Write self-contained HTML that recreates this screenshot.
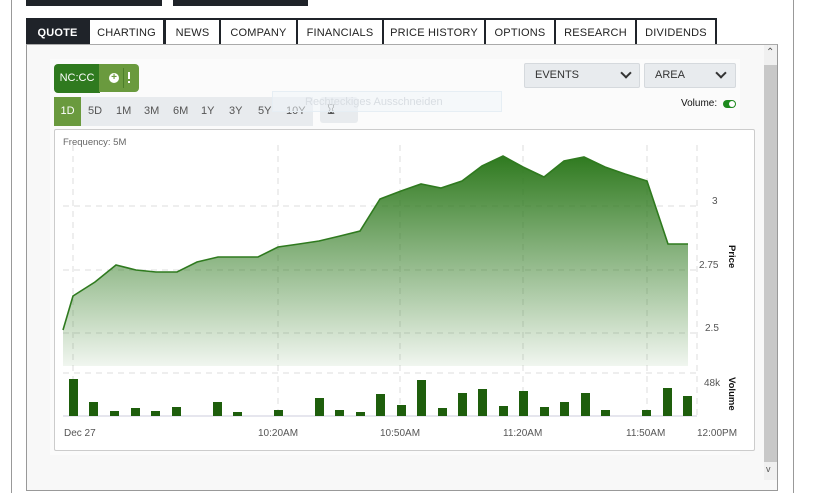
<!DOCTYPE html>
<html><head><meta charset="utf-8"><style>
*{box-sizing:border-box;margin:0;padding:0}
body{width:813px;height:493px;background:#fff;font-family:"Liberation Sans",sans-serif;position:relative;overflow:hidden}
.a{position:absolute}
.tab{position:absolute;top:18px;height:26px;border:2px solid #1f2329;border-bottom:none;font-size:11px;color:#222;text-align:center;line-height:26px;background:#fff;letter-spacing:.2px}
.rg{position:absolute;top:97px;height:29px;line-height:29px;font-size:11px;color:#555}
</style></head><body>
<div class="a" style="left:11px;top:0;width:1px;height:493px;background:#999"></div>
<div class="a" style="left:793px;top:0;width:1px;height:493px;background:#999"></div>
<div class="a" style="left:26px;top:0;width:136px;height:6px;background:#1f2329"></div>
<div class="a" style="left:173px;top:0;width:135px;height:6px;background:#1f2329"></div>

<div class="tab" style="left:26px;width:63px;background:#1f2329;color:#fff;font-weight:bold">QUOTE</div>
<div class="tab" style="left:88px;width:77px">CHARTING</div>
<div class="tab" style="left:164px;width:57px">NEWS</div>
<div class="tab" style="left:219px;width:79px">COMPANY</div>
<div class="tab" style="left:296px;width:88px">FINANCIALS</div>
<div class="tab" style="left:382px;width:104px">PRICE HISTORY</div>
<div class="tab" style="left:484px;width:72px">OPTIONS</div>
<div class="tab" style="left:554px;width:83px">RESEARCH</div>
<div class="tab" style="left:635px;width:82px">DIVIDENDS</div>

<div class="a" style="left:26px;top:44px;width:752px;height:447px;border:1px solid #999;border-top:1px solid #aaa;background:#f8f8f8"></div>
<div class="a" style="left:50px;top:59px;width:690px;height:396px;background:#fbfbfb"></div>
<div class="a" style="left:764px;top:45px;width:13px;height:435px;background:#f0f0f0"></div>
<div class="a" style="left:764px;top:65px;width:13px;height:397px;background:#c8c8c8"></div>
<div class="a" style="left:766px;top:47px;font-size:10px;color:#555">&#8963;</div>
<div class="a" style="left:766px;top:464px;font-size:9px;color:#555">v</div>

<div class="a" style="left:54px;top:64px;width:46px;height:29px;background:#2f7a1f;border-radius:4px 0 0 4px;color:#fff;font-size:11px;line-height:29px;text-align:center">NC:CC</div>
<div class="a" style="left:99px;top:64px;width:40px;height:28px;background:#6a9a3e;border-radius:0 4px 4px 0"></div>
<div class="a" style="left:109px;top:73px;width:10px;height:10px;border-radius:50%;background:#fff;color:#6a9a3e;font-size:10px;line-height:10px;text-align:center;font-weight:bold">+</div>
<div class="a" style="left:123px;top:68px;width:1px;height:20px;background:#4d7f2a"></div>
<div class="a" style="left:128px;top:72px;width:2px;height:7px;background:#fff"></div>
<div class="a" style="left:128px;top:81px;width:2px;height:2px;background:#fff"></div>

<div class="a" style="left:54px;top:97px;width:259px;height:29px;background:#e8ebee"></div>
<div class="rg" style="left:54px;width:27px;background:#6a9a3e;color:#fff;text-align:center">1D</div>
<div class="rg" style="left:88px">5D</div><div class="rg" style="left:116px">1M</div><div class="rg" style="left:144px">3M</div><div class="rg" style="left:173px">6M</div><div class="rg" style="left:201px">1Y</div><div class="rg" style="left:229px">3Y</div><div class="rg" style="left:258px">5Y</div><div class="rg" style="left:286px">10Y</div>
<div class="a" style="left:320px;top:97px;width:38px;height:26px;background:#e8ebee;border-radius:3px;color:#555;font-size:13px;line-height:26px;padding-left:7px">&#8987;&#xFE0E;</div>
<div class="a" style="left:272px;top:91px;width:230px;height:21px;border:1px solid #e6eef4;background:rgba(240,246,250,.5);color:#d8dde2;font-size:11px;line-height:20px;padding-left:32px">Rechteckiges Ausschneiden</div>

<div class="a" style="left:524px;top:63px;width:116px;height:25px;background:#e8ebee;border:1px solid #d5d9dd;border-radius:2px;font-size:11px;color:#333;line-height:23px;padding-left:10px">EVENTS</div>
<div class="a" style="left:644px;top:63px;width:92px;height:25px;background:#e8ebee;border:1px solid #d5d9dd;border-radius:2px;font-size:11px;color:#333;line-height:23px;padding-left:10px">AREA</div>
<div class="a" style="left:622px;top:69px;width:8px;height:8px;border-right:2px solid #333;border-bottom:2px solid #333;transform:rotate(45deg)"></div>
<div class="a" style="left:717px;top:69px;width:8px;height:8px;border-right:2px solid #333;border-bottom:2px solid #333;transform:rotate(45deg)"></div>
<div class="a" style="left:681px;top:98px;font-size:10px;color:#111">Volume:</div>
<div class="a" style="left:723px;top:100px;width:13px;height:8px;border-radius:4px;background:#1e8a1e"></div>
<div class="a" style="left:729px;top:101px;width:6px;height:6px;border-radius:50%;background:#fff"></div>

<div class="a" style="left:54px;top:129px;width:701px;height:322px;border:1px solid #ccc;border-radius:2px;background:#fff"></div>
<svg class="a" style="left:0;top:0" width="813" height="493">
<defs><linearGradient id="g" x1="0" y1="0" x2="0" y2="1"><stop offset="0" stop-color="#2f7a1f"/><stop offset="1" stop-color="#2f7a1f" stop-opacity=".07"/></linearGradient></defs>
<g stroke="#ddd" stroke-dasharray="6,5" stroke-width="1">
<line x1="63" y1="206" x2="697" y2="206"/><line x1="63" y1="270" x2="697" y2="270"/><line x1="63" y1="333" x2="697" y2="333"/><line x1="63" y1="373" x2="697" y2="373"/>
<line x1="73" y1="145" x2="73" y2="416"/><line x1="278" y1="145" x2="278" y2="416"/><line x1="400" y1="145" x2="400" y2="416"/><line x1="523" y1="145" x2="523" y2="416"/><line x1="647" y1="145" x2="647" y2="416"/><line x1="697" y1="145" x2="697" y2="416"/>
</g>
<path d="M63,330 L73,296 L95,282 L116,265 L136,270 L156,272 L177,272 L197,262 L218,257 L258,257 L278,247 L299,244 L319,241 L340,236 L360,231 L380,199 L401,191 L421,184 L441,188 L462,181 L482,166 L503,156 L523,167 L544,177 L564,161 L584,157 L605,167 L625,174 L647,181 L668,244 L688,244 L688,366 L63,366 Z" fill="url(#g)"/>
<path d="M63,330 L73,296 L95,282 L116,265 L136,270 L156,272 L177,272 L197,262 L218,257 L258,257 L278,247 L299,244 L319,241 L340,236 L360,231 L380,199 L401,191 L421,184 L441,188 L462,181 L482,166 L503,156 L523,167 L544,177 L564,161 L584,157 L605,167 L625,174 L647,181 L668,244 L688,244" fill="none" stroke="#2f7a1f" stroke-width="1.6"/>
<line x1="63" y1="416" x2="697" y2="416" stroke="#ccd" stroke-width="1"/>
<g fill="#1e5e0c">
<rect x="69" y="379" width="9" height="37"/><rect x="89" y="402" width="9" height="14"/><rect x="110" y="411" width="9" height="5"/><rect x="131" y="408" width="9" height="8"/><rect x="151" y="411" width="9" height="5"/><rect x="172" y="407" width="9" height="9"/><rect x="213" y="402" width="9" height="14"/><rect x="233" y="412" width="9" height="4"/><rect x="274" y="410" width="9" height="6"/><rect x="315" y="398" width="9" height="18"/><rect x="335" y="410" width="9" height="6"/><rect x="356" y="412" width="9" height="4"/><rect x="376" y="394" width="9" height="22"/><rect x="397" y="405" width="9" height="11"/><rect x="417" y="380" width="9" height="36"/><rect x="438" y="408" width="9" height="8"/><rect x="458" y="393" width="9" height="23"/><rect x="478" y="389" width="9" height="27"/><rect x="499" y="406" width="9" height="10"/><rect x="519" y="391" width="9" height="25"/><rect x="540" y="407" width="9" height="9"/><rect x="560" y="402" width="9" height="14"/><rect x="581" y="393" width="9" height="23"/><rect x="601" y="410" width="9" height="6"/><rect x="642" y="410" width="9" height="6"/><rect x="663" y="388" width="9" height="28"/><rect x="683" y="396" width="9" height="20"/>
</g>
<g font-family="Liberation Sans,sans-serif" font-size="10" fill="#555">
<text x="63" y="145" font-size="9.5" fill="#666">Frequency: 5M</text>
<text x="712" y="204">3</text><text x="699" y="268">2.75</text><text x="705" y="331">2.5</text><text x="704" y="386">48k</text>
<text x="64" y="436">Dec 27</text><text x="258" y="436">10:20AM</text><text x="380" y="436">10:50AM</text><text x="503" y="436">11:20AM</text><text x="626" y="436">11:50AM</text><text x="697" y="436">12:00PM</text>
<text transform="translate(729,245) rotate(90)" fill="#111" font-weight="bold" font-size="9.5">Price</text>
<text transform="translate(729,377) rotate(90)" fill="#111" font-weight="bold" font-size="9.5">Volume</text>
</g>
</svg>
</body></html>
